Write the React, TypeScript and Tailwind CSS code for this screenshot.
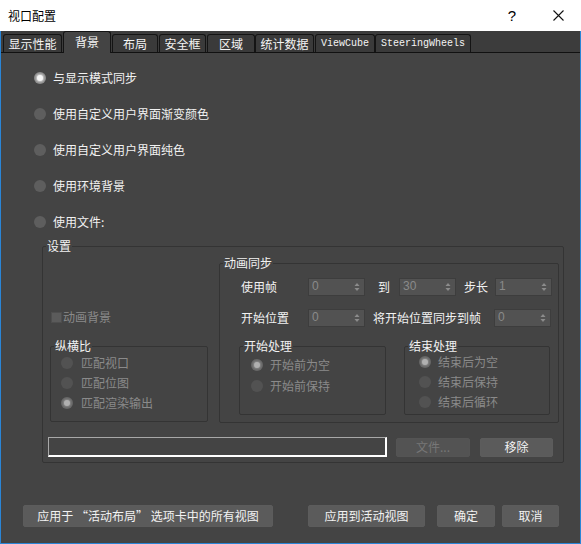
import React from "react";

function Radio({ checked = false, disabled = false }: { checked?: boolean; disabled?: boolean }) {
  const outer = checked
    ? disabled
      ? "bg-[#666666]"
      : "bg-[#8a8a8a]"
    : disabled
    ? "bg-[#525252]"
    : "bg-[#5e5e5e]";
  return (
    <span className={"flex h-3 w-3 shrink-0 items-center justify-center rounded-full " + outer}>
      {checked && (
        <span
          className={
            "h-[6px] w-[6px] rounded-full " +
            (disabled ? "bg-[#b0b0b0] shadow-[0_0_2px_1px_#8a8a8a]" : "bg-[#f4f4f4] shadow-[0_0_2px_1px_#d0d0d0]")
          }
        />
      )}
    </span>
  );
}

function Spin({ v }: { v: string }) {
  return (
    <div className="flex h-[18px] w-[57px] shrink-0 items-center justify-between border border-[#3d3d3d] bg-[#525252] pl-[3px] pr-[4px]">
      <span className="-mt-[3px] font-['Liberation_Sans',sans-serif] text-[12px] leading-[14px] text-[#8a8a8a]">{v}</span>
      <svg width="6" height="10" viewBox="0 0 6 10">
        <path d="M3 1 L5.5 4 L0.5 4 Z" fill="#8c8c8c" />
        <path d="M3 9 L5.5 6 L0.5 6 Z" fill="#8c8c8c" />
      </svg>
    </div>
  );
}

function Box({
  label,
  className,
  children,
}: {
  label: string;
  className: string;
  children?: React.ReactNode;
}) {
  return (
    <div className={"relative shrink-0 rounded-[2px] border border-[#343434] " + className}>
      <span className="absolute -top-[9px] left-[3px] bg-[#444444] px-[1px] text-[12px] leading-[16px] text-[#f2f2f2]">
        {label}
      </span>
      {children}
    </div>
  );
}

function Btn({ label, className, disabled = false }: { label: string; className: string; disabled?: boolean }) {
  return (
    <div
      className={
        "flex shrink-0 items-center justify-center whitespace-pre rounded-[2px] border text-[12px] leading-[16px] " +
        (disabled ? "border-[#545454] bg-[#535353] text-[#777777] " : "border-[#5c5c5c] bg-[#5b5b5b] text-[#f2f2f2] ") +
        className
      }
    >
      {label}
    </div>
  );
}

export default function App() {
  return (
    <div className="flex h-[544px] w-[581px] flex-col overflow-hidden bg-[#444444] font-['Noto_Sans_CJK_SC','Microsoft_YaHei',sans-serif] text-[12px] leading-[16px]">
      {/* title bar */}
      <div className="flex h-[31px] shrink-0 items-center bg-white">
        <span className="pl-[8px] text-[12px] text-black">视口配置</span>
        <div className="flex-1" />
        <div className="flex h-full w-[46px] items-center justify-center font-['Liberation_Sans',sans-serif] text-[15px] text-black">
          ?
        </div>
        <div className="flex h-full w-[46px] items-center justify-center">
          <svg width="11" height="11" viewBox="0 0 11 11">
            <path d="M0.5 0.5 L10.5 10.5 M10.5 0.5 L0.5 10.5" stroke="#111" strokeWidth="1.1" />
          </svg>
        </div>
      </div>

      <div className="flex flex-1 flex-col border-x border-b border-[#2a85d6]">
        {/* tab strip */}
        <div className="flex h-[22px] shrink-0 items-end border-b border-[#111111] bg-[#3c3c3c] pl-[2px] text-[#f4f4f4]">
          <div className="flex h-[18px] w-[59px] items-center justify-center rounded-t-[3px] border border-b-0 border-[#141414] bg-[#3a3a3a]">
            显示性能
          </div>
          <div className="relative z-10 -mb-px ml-[1px] flex h-[22px] w-[48px] items-center justify-center rounded-t-[3px] border border-b-0 border-[#141414] bg-[#444444] pb-[2px]">
            背景
          </div>
          <div className="ml-[1px] flex h-[18px] w-[46px] items-center justify-center rounded-t-[3px] border border-b-0 border-[#141414] bg-[#3a3a3a]">
            布局
          </div>
          <div className="ml-[1px] flex h-[18px] w-[47px] items-center justify-center rounded-t-[3px] border border-b-0 border-[#141414] bg-[#3a3a3a]">
            安全框
          </div>
          <div className="ml-[1px] flex h-[18px] w-[48px] items-center justify-center rounded-t-[3px] border border-b-0 border-[#141414] bg-[#3a3a3a]">
            区域
          </div>
          <div className="flex h-[18px] w-[59px] items-center justify-center rounded-t-[3px] border border-b-0 border-[#141414] bg-[#3a3a3a]">
            统计数据
          </div>
          <div className="ml-[1px] flex h-[18px] w-[60px] items-center justify-center rounded-t-[3px] border border-b-0 border-[#141414] bg-[#3a3a3a] font-['Liberation_Mono',monospace] text-[10px]">
            ViewCube
          </div>
          <div className="flex h-[18px] w-[96px] items-center justify-center rounded-t-[3px] border border-b-0 border-[#141414] bg-[#3a3a3a] font-['Liberation_Mono',monospace] text-[10px]">
            SteeringWheels
          </div>
        </div>

        {/* content */}
        <div className="flex flex-1 flex-col pt-[7px] text-[#f2f2f2]">
          {[
            ["与显示模式同步", true],
            ["使用自定义用户界面渐变颜色", false],
            ["使用自定义用户界面纯色", false],
            ["使用环境背景", false],
            ["使用文件:", false],
          ].map(([label, checked]) => (
            <div key={label as string} className="flex h-[36px] items-center gap-[7px] pl-[33px]">
              <Radio checked={checked as boolean} />
              <span>{label as string}</span>
            </div>
          ))}

          {/* settings group */}
          <Box label="设置" className="ml-[41px] mt-[6px] flex h-[217px] w-[522px] flex-col">
            <div className="flex h-[176px] shrink-0">
              {/* left column */}
              <div className="ml-[7px] flex w-[158px] flex-col">
                <div className="ml-[1px] mt-[62px] flex h-[16px] items-center gap-[1px] text-[#8a8a8a]">
                  <span className="h-[11px] w-[11px] border border-[#4e4e4e] bg-[#5b5b5b]" />
                  <span>动画背景</span>
                </div>
                <Box label="纵横比" className="mt-[21px] h-[76px] w-[158px] pt-[6px] text-[#8a8a8a]">
                  <div className="flex h-[20px] items-center gap-[8px] pl-[10px]">
                    <Radio disabled />
                    <span>匹配视口</span>
                  </div>
                  <div className="flex h-[20px] items-center gap-[8px] pl-[10px]">
                    <Radio disabled />
                    <span>匹配位图</span>
                  </div>
                  <div className="flex h-[20px] items-center gap-[8px] pl-[10px]">
                    <Radio disabled checked />
                    <span>匹配渲染输出</span>
                  </div>
                </Box>
              </div>

              {/* animation sync */}
              <Box label="动画同步" className="ml-[11px] mt-[16px] h-[160px] w-[340px]">
                <div className="mt-[14px] flex h-[18px] items-center pl-[21px]">
                  <span className="w-[67px] shrink-0">使用帧</span>
                  <Spin v="0" />
                  <span className="ml-[13px] w-[21px] shrink-0">到</span>
                  <Spin v="30" />
                  <span className="ml-[8px] w-[31px] shrink-0">步长</span>
                  <Spin v="1" />
                </div>
                <div className="mt-[13px] flex h-[18px] items-center pl-[21px]">
                  <span className="w-[67px] shrink-0">开始位置</span>
                  <Spin v="0" />
                  <span className="ml-[8px] w-[121px] shrink-0">将开始位置同步到帧</span>
                  <Spin v="0" />
                </div>
                <div className="mt-[19px] flex gap-[18px] pl-[19px]">
                  <Box label="开始处理" className="h-[69px] w-[147px] pt-[7px] text-[#8a8a8a]">
                    <div className="flex h-[21px] items-center gap-[7px] pl-[11px]">
                      <Radio disabled checked />
                      <span>开始前为空</span>
                    </div>
                    <div className="flex h-[21px] items-center gap-[7px] pl-[11px]">
                      <Radio disabled />
                      <span>开始前保持</span>
                    </div>
                  </Box>
                  <Box label="结束处理" className="h-[69px] w-[146px] pt-[5px] text-[#8a8a8a]">
                    <div className="flex h-[20px] items-center gap-[7px] pl-[14px]">
                      <Radio disabled checked />
                      <span>结束后为空</span>
                    </div>
                    <div className="flex h-[20px] items-center gap-[7px] pl-[14px]">
                      <Radio disabled />
                      <span>结束后保持</span>
                    </div>
                    <div className="flex h-[20px] items-center gap-[7px] pl-[14px]">
                      <Radio disabled />
                      <span>结束后循环</span>
                    </div>
                  </Box>
                </div>
              </Box>
            </div>

            {/* file row */}
            <div className="mt-[14px] flex h-[20px] items-center pl-[5px]">
              <div className="h-[20px] w-[339px] shrink-0 border border-b-2 border-r-2 border-b-white border-l-[#a8a8a8] border-r-white border-t-[#a8a8a8] bg-[#444444]" />
              <Btn label="文件..." disabled className="ml-[9px] h-[19px] w-[74px]" />
              <Btn label="移除" className="ml-[10px] h-[19px] w-[73px]" />
            </div>
          </Box>

          <div className="flex-1" />

          {/* bottom buttons */}
          <div className="mb-[16px] flex h-[22px] shrink-0 pl-[22px]">
            <Btn label="应用于 “活动布局” 选项卡中的所有视图" className="h-[22px] w-[250px]" />
            <Btn label="应用到活动视图" className="ml-[35px] h-[22px] w-[117px]" />
            <Btn label="确定" className="ml-[12px] h-[22px] w-[58px]" />
            <Btn label="取消" className="ml-[7px] h-[22px] w-[57px]" />
          </div>
        </div>
      </div>
    </div>
  );
}
